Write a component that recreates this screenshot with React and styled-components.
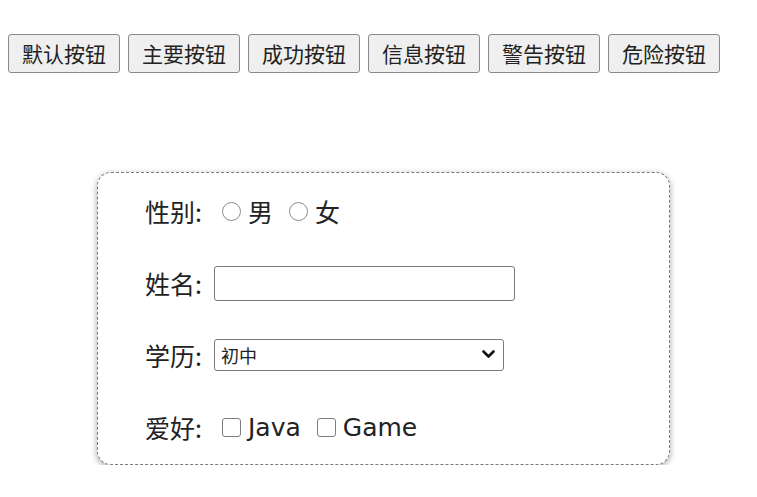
import React from 'react';
import styled, { createGlobalStyle } from 'styled-components';

const GlobalStyle = createGlobalStyle`
  body {
    margin: 0;
    background: #fff;
    font-family: "Noto Sans CJK SC", "Liberation Sans", sans-serif;
    color: #222;
  }
`;

const Page = styled.div`
  padding: 34px 0 0 8px;
`;

const Toolbar = styled.div`
  display: flex;
  gap: 8px;
`;

const Button = styled.button`
  height: 39px;
  padding: 0 13px;
  font-family: "Noto Sans CJK SC", sans-serif;
  font-size: 21px;
  color: #222;
  background: #efefef;
  border: 1px solid #8a8a8a;
  border-radius: 3px;
  line-height: 1;
`;

const Card = styled.form`
  width: 573px;
  height: 293px;
  box-sizing: border-box;
  margin: 99px 0 0 89px;
  padding: 18px 0 0 47px;
  border: 1px dashed #7a7a7a;
  border-radius: 14px;
  box-shadow: 0 2px 6px rgba(0, 0, 0, 0.35);
  display: flex;
  flex-direction: column;
  gap: 32px;
`;

const Row = styled.div`
  display: flex;
  align-items: center;
  height: 40px;
  font-size: 25px;
`;

const Label = styled.span`
  width: 69px;
  flex-shrink: 0;
`;

const Option = styled.label`
  display: flex;
  align-items: center;
  gap: ${(p) => p.$gap || 7}px;
  margin-left: ${(p) => (p.$first ? 8 : 16)}px;
  font-family: "DejaVu Sans", "Noto Sans CJK SC", sans-serif;
`;

const Radio = styled.input.attrs({ type: 'radio' })`
  appearance: none;
  width: 19px;
  height: 19px;
  margin: 0;
  border: 1.5px solid #8c8c8c;
  border-radius: 50%;
  background: #fff;
`;

const Check = styled.input.attrs({ type: 'checkbox' })`
  appearance: none;
  width: 19px;
  height: 19px;
  margin: 0;
  border: 1.5px solid #7c7c7c;
  border-radius: 3px;
  background: #fff;
`;

const TextInput = styled.input`
  width: 301px;
  height: 35px;
  box-sizing: border-box;
  margin: 0;
  border: 1px solid #7a7a7a;
  border-radius: 3px;
`;

const SelectWrap = styled.div`
  position: relative;
  display: flex;
`;

const Select = styled.select`
  appearance: none;
  width: 290px;
  height: 32px;
  box-sizing: border-box;
  margin: 0;
  padding: 0 30px 0 6px;
  font-family: "Noto Sans CJK SC", sans-serif;
  font-size: 18px;
  color: #222;
  border: 1px solid #7a7a7a;
  border-radius: 3px;
  background: #fff;
`;

const Chevron = styled.svg`
  position: absolute;
  right: 9px;
  top: 11px;
  width: 13px;
  height: 9px;
  pointer-events: none;
`;

const buttons = ['默认按钮', '主要按钮', '成功按钮', '信息按钮', '警告按钮', '危险按钮'];

export default function App() {
  return (
    <Page>
      <GlobalStyle />
      <Toolbar>
        {buttons.map((b) => (
          <Button type="button" key={b}>{b}</Button>
        ))}
      </Toolbar>
      <Card>
        <Row>
          <Label>性别:</Label>
          <Option $first>
            <Radio name="sex" />男
          </Option>
          <Option>
            <Radio name="sex" />女
          </Option>
        </Row>
        <Row>
          <Label>姓名:</Label>
          <TextInput type="text" />
        </Row>
        <Row>
          <Label>学历:</Label>
          <SelectWrap>
            <Select defaultValue="初中">
              <option>初中</option>
              <option>高中</option>
              <option>大学</option>
            </Select>
            <Chevron viewBox="0 0 13 9">
              <path d="M1.5 1.5 L6.5 6.5 L11.5 1.5" fill="none" stroke="#111" strokeWidth="2.6" strokeLinecap="round" strokeLinejoin="round" />
            </Chevron>
          </SelectWrap>
        </Row>
        <Row>
          <Label>爱好:</Label>
          <Option $first>
            <Check />Java
          </Option>
          <Option>
            <Check />Game
          </Option>
        </Row>
      </Card>
    </Page>
  );
}
